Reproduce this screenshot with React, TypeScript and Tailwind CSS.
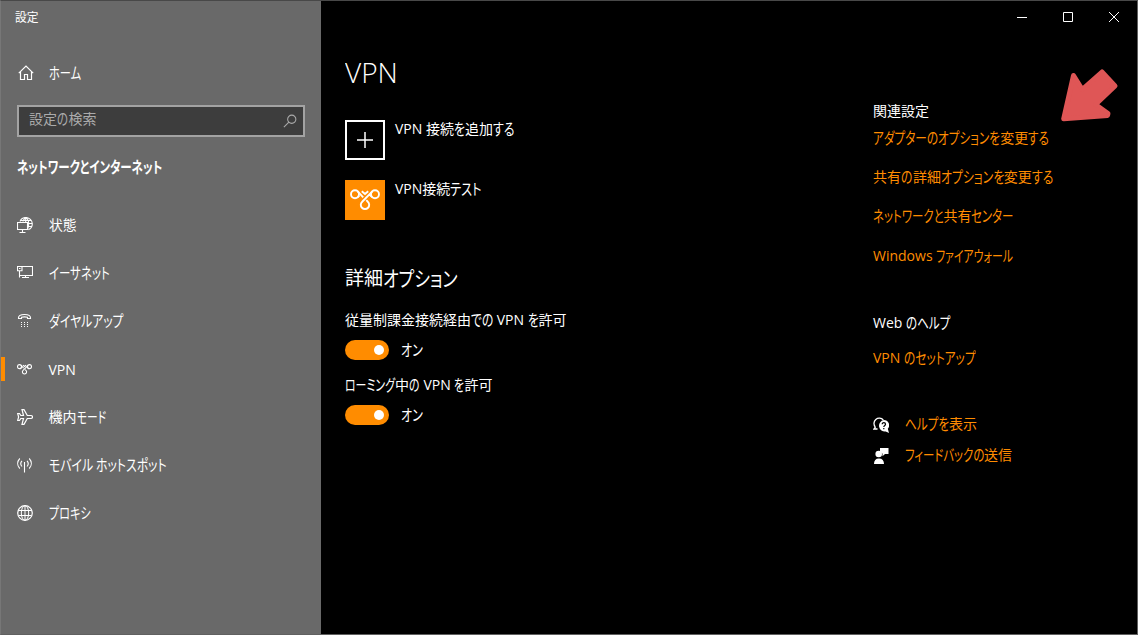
import { useLayoutEffect, useRef, type ReactNode } from "react";

const KANA = /([\u3040-\u30ff]+)/;

type LabelProps = { text: string; width: number; className?: string };

/* Single-line label whose kana are condensed so that the line has the given width. */
function Label({ text, width, className = "" }: LabelProps) {
  const ref = useRef<HTMLSpanElement>(null);
  const runs = text.split(KANA).filter(Boolean);

  useLayoutEffect(() => {
    const root = ref.current;
    if (!root) return;
    const outer = Array.from(root.children) as HTMLElement[];
    const sizes = outer.map((el) => (el.firstElementChild as HTMLElement).offsetWidth);
    const hasKana = runs.some((r) => KANA.test(r));
    let fixed = 0;
    let flexible = 0;
    runs.forEach((r, i) => {
      if (!hasKana || KANA.test(r)) flexible += sizes[i];
      else fixed += sizes[i];
    });
    const factor = (width - fixed) / flexible;
    runs.forEach((r, i) => {
      if (hasKana && !KANA.test(r)) return;
      outer[i].style.width = `${sizes[i] * factor}px`;
      (outer[i].firstElementChild as HTMLElement).style.transform = `scale(${factor}, ${hasKana ? 1.1 : 1})`;
    });
  }, [text, width]);

  return (
    <span
      ref={ref}
      className={`flex whitespace-pre font-['Open_Sans','Noto_Sans_CJK_JP',sans-serif] [font-feature-settings:'palt'] ${className}`}
    >
      {runs.map((r, i) => (
        <span key={i} className="block shrink-0">
          <span className="inline-block origin-left">{r}</span>
        </span>
      ))}
    </span>
  );
}

function Icon({ children, className = "size-4" }: { children: ReactNode; className?: string }) {
  return (
    <svg viewBox="0 0 16 16" className={`shrink-0 ${className}`} fill="none" stroke="currentColor" strokeWidth="1">
      {children}
    </svg>
  );
}

const HomeIcon = () => (
  <Icon>
    <path d="M.8 8.2 8 1l7.2 7.2M2.500 6.800v7.700h4v-5h3v5h4V6.800" strokeWidth="1.2" />
  </Icon>
);
const StatusIcon = () => (
  <Icon>
    <path d="M3 4.500C4 2 6.200.5 8.700.5c3.700 0 6.600 2.900 6.600 6.300 0 2.700-1.500 5-4 5.900M8.700.5C7.200 1.600 6.300 3 6 4.500M8.700.5c2 1.200 3 3.300 3 6.200 0 2-.3 3.500-.8 4.800M8.700.5v4.500M4 3.500h10M11 6.500h4.200M11 9.500h3.600" strokeWidth="1.1" />
    <path d="M.5 5.500h10v7H.5zM5.500 12.500v2.500M2.500 15.500h6" strokeWidth="1.1" />
  </Icon>
);
const EthernetIcon = () => (
  <Icon>
    <path d="M5 1.500h10.500v9H3M.5 1.500H5v4.200H.5zM2.500 6v6.500M2 3.500h1.500M8.500 10.500v2M5 12.500h7" strokeWidth="1.1" />
  </Icon>
);
const DialIcon = () => (
  <Icon>
    <path d="M1.500 4.800C1.500 2.500 4.200 1.500 7.500 1.500s6 1 6 3.300v.7h-3V4.300c-2-.6-4-.6-6 0v1.200h-3z" strokeWidth="1.1" />
    <path d="M4 9.500h1M7 9.500h1M10 9.500h1M4 11.500h1M7 11.500h1M10 11.500h1M4 13.500h1M7 13.500h1M10 13.500h1" />
  </Icon>
);
const VpnLoops = ({ className, weight }: { className: string; weight: number }) => (
  <svg viewBox="0 0 30 22" className={`shrink-0 ${className}`} fill="none" stroke="currentColor" strokeWidth={weight}>
    <circle cx="5" cy="5.300" r="4" />
    <circle cx="25" cy="5.300" r="4" />
    <path d="M7.600 2.300 13.200 8.300M11.800 2.200 15 4.900l3.200-2.700M22.400 2.300 12.200 12.700a4.200 4.200 0 1 0 5.600 0L16.300 11.200M7.800 8.200l1.400-1.500M22.200 8.200l-2.400-2.400" />
  </svg>
);
const PlaneIcon = () => (
  <Icon>
    <path d="M5 .7h2L10.300 6.500h3.600c1 0 1.600.6 1.600 1.500s-.6 1.500-1.600 1.500h-3.600L7 15.300H5l1.500-5.800H3.800L2.500 11.500H.7L1.600 8 .7 4.500h1.800l1.300 2h2.700z" strokeWidth="1.2" />
  </Icon>
);
const HotspotIcon = () => (
  <Icon>
    <path d="M7.500 5v10.500M2.800 1.500C0 4.500 0 8.500 2.800 11.500M5 3.800C3.500 5.500 3.500 7.800 5 9.500M12.200 1.500c2.800 3 2.800 7 0 10M10 3.800c1.500 1.700 1.500 4 0 5.700" strokeWidth="1.1" />
  </Icon>
);
const ProxyIcon = () => (
  <Icon>
    <circle cx="8" cy="8" r="7.300" strokeWidth="1.200" />
    <ellipse cx="8" cy="8" rx="3.700" ry="7.300" />
    <path d="M8 .7v14.600M1.500 5.500h13M1.500 10.500h13" />
  </Icon>
);

type Item = { text: string; width: number; icon: ReactNode; active?: boolean };
const items: Item[] = [
  { text: "状態", width: 27.5, icon: <StatusIcon /> },
  { text: "イーサネット", width: 60.5, icon: <EthernetIcon /> },
  { text: "ダイヤルアップ", width: 74.5, icon: <DialIcon /> },
  { text: "VPN", width: 27, icon: <VpnLoops className="h-[11px] w-[15px]" weight={2.2} />, active: true },
  { text: "機内モード", width: 57, icon: <PlaneIcon /> },
  { text: "モバイル ホットスポット", width: 118.5, icon: <HotspotIcon /> },
  { text: "プロキシ", width: 42, icon: <ProxyIcon /> },
];

function Toggle() {
  return (
    <div className="flex h-5 items-center">
      <div className="flex h-5 w-11 items-center justify-end rounded-full bg-[#ff8c00] pr-[5px]">
        <div className="size-[10px] rounded-full bg-white" />
      </div>
      <Label text="オン" width={21.5} className="ml-3 text-[14px] leading-5" />
    </div>
  );
}

function Sidebar() {
  return (
    <aside className="flex w-80 shrink-0 flex-col bg-[#696969]">
      <Label text="設定" width={23.5} className="mt-2 ml-[14px] text-[12px] leading-[18px]" />
      <div className="mt-[36px] ml-[17px] flex h-5 items-center">
        <HomeIcon />
        <Label text="ホーム" width={32} className="ml-[15px] text-[14px] leading-5" />
      </div>
      <div className="mt-[22px] ml-4 flex h-8 w-72 items-center justify-between border-2 border-[#a3a3a3] bg-[#3d3d3d] pr-[6px] pl-[10px] text-[#ababab]">
        <Label text="設定の検索" width={67.5} className="-translate-y-[2px] text-[14px] leading-5" />
        <Icon className="size-[14px]">
          <circle cx="10" cy="6" r="4.700" strokeWidth="1.200" />
          <path d="M6.700 9.300 1 15" strokeWidth="1.200" />
        </Icon>
      </div>
      <Label text="ネットワークとインターネット" width={145} className="mt-5 ml-4 text-[14px] leading-5 font-bold" />
      <nav className="mt-6 flex flex-col">
        {items.map((it) => (
          <div key={it.text} className="flex h-12 items-center">
            <div className={`h-6 w-1 ${it.active ? "bg-[#ff8c00]" : ""}`} />
            <div className="ml-3 flex w-[31.5px] items-center">{it.icon}</div>
            <Label
              text={it.text}
              width={it.width}
              className={`text-[14px] leading-5 ${it.active ? "translate-y-px" : ""}`}
            />
          </div>
        ))}
      </nav>
    </aside>
  );
}

function Content() {
  return (
    <section className="flex w-[552px] shrink-0 flex-col pl-6">
      <Label text="VPN" width={53} className="mt-[54px] text-[27px] leading-9 font-light" />
      <div className="mt-[29px] flex h-10 gap-[10px]">
        <div className="flex size-10 items-center justify-center border-2 border-white">
          <Icon><path d="M8 0v16M0 8h16" strokeWidth="1.500" /></Icon>
        </div>
        <Label text="VPN 接続を追加する" width={119.5} className="-mt-px text-[14px] leading-5" />
      </div>
      <div className="mt-5 flex h-10 gap-[10px]">
        <div className="flex size-10 items-center justify-center bg-[#ff8c00]">
          <VpnLoops className="h-[22px] w-[30px]" weight={1.9} />
        </div>
        <Label text="VPN接続テスト" width={86.5} className="-mt-px text-[14px] leading-5" />
      </div>
      <Label text="詳細オプション" width={113} className="mt-11 text-[19px] leading-7" />
      <Label text="従量制課金接続経由での VPN を許可" width={222} className="mt-[18px] text-[14px] leading-5" />
      <div className="mt-[10px]"><Toggle /></div>
      <Label text="ローミング中の VPN を許可" width={148} className="mt-[15px] text-[14px] leading-5" />
      <div className="mt-[10px]"><Toggle /></div>
    </section>
  );
}

function Related() {
  return (
    <section className="flex flex-col text-[14px] leading-5 text-[#ff8c00]">
      <Label text="関連設定" width={56} className="mt-[100px] text-white" />
      <Label text="アダプターのオプションを変更する" width={176} className="mt-[7px]" />
      <Label text="共有の詳細オプションを変更する" width={180} className="mt-[19px]" />
      <Label text="ネットワークと共有センター" width={141} className="mt-[19px]" />
      <Label text="Windows ファイアウォール" width={140} className="mt-5" />
      <Label text="Web のヘルプ" width={77.5} className="mt-[47px] text-white" />
      <Label text="VPN のセットアップ" width={103} className="mt-[15px]" />
      <div className="mt-[47px] flex h-5 items-center">
        <Icon className="size-4 text-white">
          <path d="M2.300 10A5 5 0 1 1 10.300 3M2.500 9.800 1 12H4.500" strokeWidth="1.300" />
          <path d="M10.800 3a5.300 5.300 0 0 1 4 8.800L16 16l-3.200-1.600A5.700 5.700 0 1 1 10.800 3z" fill="currentColor" stroke="none" />
          <path d="M9.200 7.200c0-2.200 3.300-2.200 3.300 0 0 1.300-1.700 1.200-1.700 2.800M10.800 11v1.300" stroke="#000" strokeWidth="1.200" />
        </Icon>
        <Label text="ヘルプを表示" width={72} className="ml-4 -translate-y-px" />
      </div>
      <div className="mt-[11px] flex h-5 items-center">
        <Icon className="size-4 text-white">
          <path d="M7 0h8.500v6H12L9.500 8.200V5.500L7 4zM1 16c0-3.700 1.700-5.600 5-5.600s5 1.900 5 5.600z" fill="currentColor" stroke="none" />
          <circle cx="5.700" cy="6" r="3.300" fill="currentColor" stroke="none" />
        </Icon>
        <Label text="フィードバックの送信" width={107} className="ml-4 -translate-y-px" />
      </div>
    </section>
  );
}

function WindowControls() {
  return (
    <div className="absolute top-0 right-0 flex h-8 text-white">
      <svg viewBox="0 0 46 32" className="h-8 w-[46px]" stroke="currentColor"><path d="M18 16.500h10" /></svg>
      <svg viewBox="0 0 46 32" className="h-8 w-[46px]" stroke="currentColor" fill="none"><path d="M18.500 11.500h9v9h-9z" /></svg>
      <svg viewBox="0 0 46 32" className="h-8 w-[46px]" stroke="currentColor"><path d="m18 11 10 10M28 11 18 21" /></svg>
    </div>
  );
}

export default function App() {
  return (
    <div className="relative flex h-[635px] w-[1138px] overflow-hidden border border-t-[#484848] border-r-[#606060] border-b-[#606060] border-l-[#777777] bg-black text-white">
      <Sidebar />
      <main className="flex flex-1">
        <Content />
        <Related />
      </main>
      <WindowControls />
      <svg viewBox="0 0 60 56" className="absolute top-[66px] left-[1058px] h-14 w-[60px]">
        <path
          d="M4.700 51.700 14.500 8.500 23.200 22.500 43 5l13 14-19.500 18.500 12.500 9-.5 2z"
          fill="#df5656"
          stroke="#df5656"
          strokeWidth="5"
          strokeLinejoin="round"
        />
      </svg>
    </div>
  );
}
